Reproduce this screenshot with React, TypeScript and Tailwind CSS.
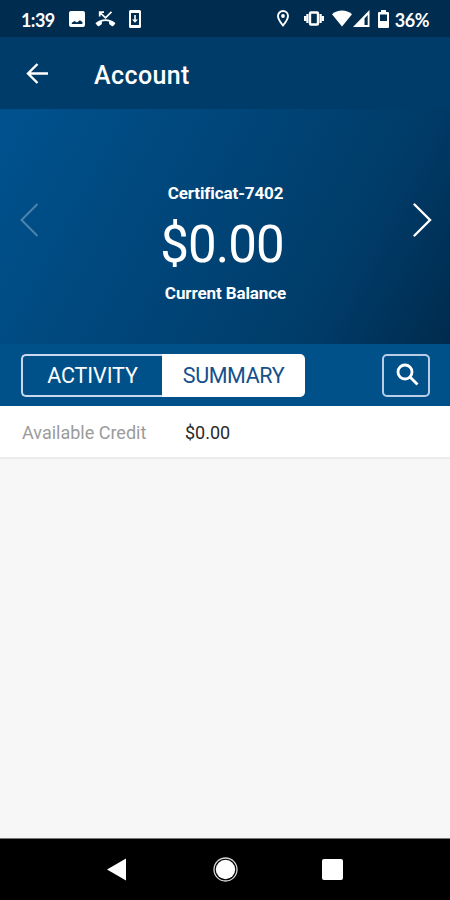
const StatusBar = () => (
  <div className="flex h-[37px] items-center bg-[#002c4f] pl-[21px] pr-[21px] text-white">
    <span className="w-[48px] pt-[2px] font-['Lato'] text-[18px] font-bold leading-none tracking-[-0.6px]">1:39</span>
    <svg className="size-4" viewBox="0 0 16 16">
      <path
        fill="currentColor"
        fillRule="evenodd"
        d="M2 0h12a2 2 0 0 1 2 2v12a2 2 0 0 1-2 2H2a2 2 0 0 1-2-2V2a2 2 0 0 1 2-2Zm.8 13h10.600V11L10.900 9.200 8 11.500 5.500 10 2.800 11.800Z"
      />
    </svg>
    <svg className="ml-[10px] h-[18px] w-[21px]" viewBox="0 0 21 18">
      <path
        fill="currentColor"
        d="M10.500 9.200c-3.600 0-7 1.300-9.500 3.500-.5.400-.5 1 0 1.400l1.800 1.800c.4.400 1 .4 1.400.1l2.200-1.600c.3-.2.5-.5.5-.9v-2.100c2.300-.7 4.900-.7 7.200 0v2.100c0 .4.2.7.5.9l2.200 1.600c.4.300 1 .3 1.400-.1l1.800-1.800c.4-.4.4-1 0-1.400-2.500-2.200-5.900-3.500-9.500-3.500Z"
      />
      <path
        fill="none"
        stroke="currentColor"
        strokeWidth="1.700"
        d="M4.700 6.500V2.200H9M5 2.500l5.500 5.300 6-6"
      />
    </svg>
    <svg className="ml-[13px] h-[18px] w-3" viewBox="0 0 12 18">
      <path
        fill="currentColor"
        fillRule="evenodd"
        d="M1.500 0h9A1.500 1.500 0 0 1 12 1.500v15a1.500 1.500 0 0 1-1.500 1.500h-9A1.500 1.500 0 0 1 0 16.500v-15A1.500 1.500 0 0 1 1.500 0ZM2 3v12h8V3Z"
      />
      <path fill="currentColor" d="M5.200 5h1.600v4.500h2.200L6 12.800 3 9.500h2.200Z" />
    </svg>

    <div className="ml-auto flex items-center">
      <svg className="h-[17px] w-3" viewBox="0 0 12 17">
        <path
          fill="none"
          stroke="currentColor"
          strokeWidth="1.900"
          d="M6 1a5 5 0 0 1 5 5c0 3.500-5 9.500-5 9.500S1 9.500 1 6a5 5 0 0 1 5-5Z"
        />
        <circle cx="6" cy="6" r="1.900" fill="currentColor" />
      </svg>
      <svg className="ml-[15px] h-[15px] w-5" viewBox="0 0 20 15">
        <rect x="6" y="1.500" width="8" height="12" rx="1" fill="none" stroke="currentColor" strokeWidth="2.400" />
        <path stroke="currentColor" strokeWidth="2.200" d="M3.400 3v9M16.600 3v9M1.100 5v5M18.900 5v5" />
      </svg>
      <svg className="ml-[8px] h-[17px] w-5" viewBox="0 0 20 17">
        <path fill="currentColor" d="M0 4.200C5.600-.7 14.400-.7 20 4.200L10 16.500Z" />
      </svg>
      <svg className="ml-[1px] h-[17px] w-[17px]" viewBox="0 0 17 17">
        <path fill="currentColor" fillRule="evenodd" d="M16.500 0v17H0ZM14.700 5l-3.200 3.500V15h3.200Z" />
      </svg>
      <svg className="ml-[8px] h-[18px] w-[11px]" viewBox="0 0 11 18">
        <path
          fill="currentColor"
          fillRule="evenodd"
          d="M3 0h5v2h2a1 1 0 0 1 1 1v14a1 1 0 0 1-1 1H1a1 1 0 0 1-1-1V3a1 1 0 0 1 1-1h2ZM2 4.500V11h7V4.500Z"
        />
      </svg>
      <span className="ml-[6px] pt-[2px] font-['Lato'] text-[18px] font-bold leading-none tracking-[-0.5px]">36%</span>
    </div>
  </div>
);

const AppBar = () => (
  <div className="flex h-[72px] items-center bg-[#003c69] pl-[26px] text-white">
    <svg className="h-[22px] w-[23px]" viewBox="0 0 23 22" fill="none" stroke="currentColor" strokeWidth="2.400">
      <path d="M22 11.500H2M11.500 2 2 11.500l9.500 9.500" />
    </svg>
    <h1 className="ml-[45px] pt-[4px] text-[25px] font-medium leading-none tracking-[0.4px]">Account</h1>
  </div>
);

const BalanceCard = () => (
  <div className="flex h-[235px] justify-between bg-[linear-gradient(118deg,#00528f_0%,#00467a_40%,#003c69_74%,#002b4e_100%)] pl-5 pr-[18px] text-white">
    <svg className="mt-[94px] h-[34px] w-[19px] opacity-30" viewBox="0 0 19 34" fill="none" stroke="currentColor" strokeWidth="2">
      <path d="M17.500 1 1.500 17l16 16" />
    </svg>
    <div className="flex flex-col items-center">
      <p className="mt-[74px] mr-[1px] text-[17px] font-bold leading-[20px] tracking-[-0.1px]">Certificat-7402</p>
      <p className="mt-[13px] mr-[8px] text-[51px] leading-[58px] tracking-[-0.9px]">$0.00</p>
      <p className="mt-[9px] mr-[1px] text-[17px] font-bold leading-[20px] tracking-[-0.1px]">Current Balance</p>
    </div>
    <svg className="mt-[94px] h-[34px] w-[19px]" viewBox="0 0 19 34" fill="none" stroke="currentColor" strokeWidth="2.400" strokeLinecap="round">
      <path d="m1.500 1.500 15.500 15.500-15.500 15.500" />
    </svg>
  </div>
);

const Tabs = () => (
  <div className="flex h-[62px] items-center justify-between bg-[#00508a] pl-[21px] pr-5">
    <div className="flex h-[43px] w-[284px] text-[21.500px] tracking-[-0.1px]">
      <button className="w-[141px] rounded-l-[5px] border-2 border-r-0 border-[#c9d8ec] pt-[2px] text-white">
        ACTIVITY
      </button>
      <button className="flex-1 rounded-r-[5px] bg-white pt-[2px] tracking-[-0.4px] text-[#154f8c]">SUMMARY</button>
    </div>
    <button className="flex h-[43px] w-12 items-center justify-center rounded-[5px] border-2 border-[#b9cde6] text-white">
      <svg className="mb-[2px] ml-[2px] size-[23px]" viewBox="0 0 23 23" fill="none" stroke="currentColor" strokeWidth="2.800">
        <circle cx="9" cy="9" r="7" />
        <path d="m14 14 7.500 7.500" />
      </svg>
    </button>
  </div>
);

const NavBar = () => (
  <div className="flex h-[62px] items-center justify-between border-t border-[#777] bg-black pl-[107px] pr-[107px] text-white">
    <svg className="h-[23px] w-5" viewBox="0 0 20 23">
      <path fill="currentColor" d="M19 .5v22L0 11.500Z" />
    </svg>
    <svg className="ml-[1px] size-[25px]" viewBox="0 0 25 25">
      <circle cx="12.500" cy="12.500" r="11.500" fill="none" stroke="#d8d8d8" strokeWidth="1.300" />
      <circle cx="12.500" cy="12.500" r="9.700" fill="currentColor" />
    </svg>
    <div className="size-[21px] rounded-[2px] bg-white" />
  </div>
);

const App = () => {
  return (
    <div className="flex h-[900px] w-[450px] flex-col overflow-hidden bg-[#f7f7f7] font-['Roboto',sans-serif]">
      <StatusBar />
      <AppBar />
      <BalanceCard />
      <Tabs />
      <div className="flex h-[53px] items-center border-b-2 border-[#ececec] bg-white pl-[22px] pt-[2px] text-[18px] leading-none">
        <span className="w-[163px] text-[#9b9b9b]">Available Credit</span>
        <span className="text-[#2a2a2a]">$0.00</span>
      </div>
      <div className="flex-1" />
      <NavBar />
    </div>
  );
};

export default App;
